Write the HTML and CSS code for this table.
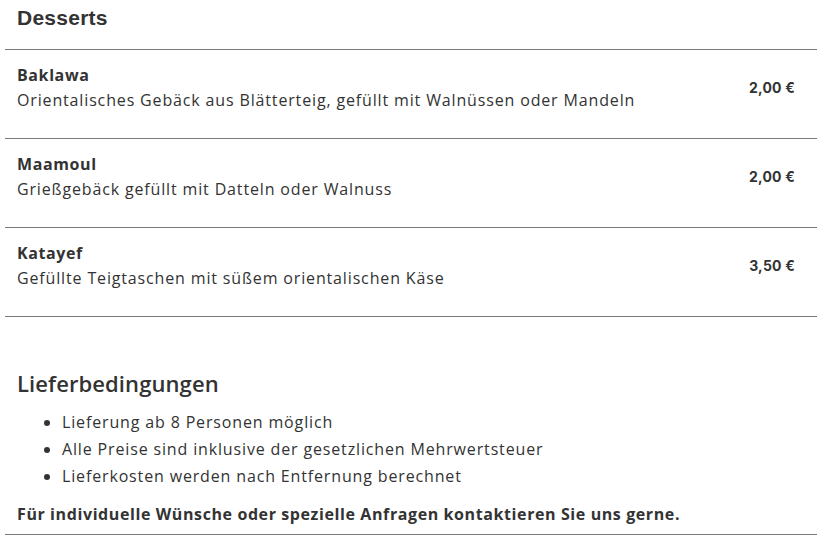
FILE: index.html
```html
<!DOCTYPE html>
<html lang="de">
<head>
<meta charset="utf-8">
<title>Desserts</title>
<link rel="stylesheet" href="styles.css">
</head>
<body>
<main class="page">
  <section class="menu">
    <h2 class="menu-title">Desserts</h2>
    <div class="item">
      <div class="item-text">
        <h3 class="item-name">Baklawa</h3>
        <p class="item-desc">Orientalisches Gebäck aus Blätterteig, gefüllt mit Walnüssen oder Mandeln</p>
      </div>
      <div class="item-price">2,00 €</div>
    </div>
    <div class="item">
      <div class="item-text">
        <h3 class="item-name">Maamoul</h3>
        <p class="item-desc">Grießgebäck gefüllt mit Datteln oder Walnuss</p>
      </div>
      <div class="item-price">2,00 €</div>
    </div>
    <div class="item">
      <div class="item-text">
        <h3 class="item-name">Katayef</h3>
        <p class="item-desc">Gefüllte Teigtaschen mit süßem orientalischen Käse</p>
      </div>
      <div class="item-price">3,50 €</div>
    </div>
  </section>
  <section class="terms">
    <h2 class="terms-title">Lieferbedingungen</h2>
    <ul class="terms-list">
      <li>Lieferung ab 8 Personen möglich</li>
      <li>Alle Preise sind inklusive der gesetzlichen Mehrwertsteuer</li>
      <li>Lieferkosten werden nach Entfernung berechnet</li>
    </ul>
    <p class="terms-note">Für individuelle Wünsche oder spezielle Anfragen kontaktieren Sie uns gerne.</p>
  </section>
</main>
</body>
</html>
```
FILE: styles.css
```css
html, body {
  margin: 0;
  padding: 0;
  background: #fff;
}
body {
  color: #333;
  font-family: "Open Sans", "DejaVu Sans", sans-serif;
  font-size: 16px;
  letter-spacing: 0.85px;
}
.page {
  padding: 0 5px;
}
.menu-title {
  margin: 0;
  padding: 4px 12px 0;
  height: 50px;
  box-sizing: border-box;
  font-family: "Liberation Sans", Arial, sans-serif;
  font-weight: 700;
  font-size: 21px;
  line-height: 28px;
  letter-spacing: 0.25px;
  color: #333;
  border-bottom: 1px solid #7a7a7a;
}
.item {
  display: flex;
  align-items: center;
  padding: 13px 22px 24px 12px;
  border-bottom: 1px solid #7a7a7a;
}
.item-text {
  flex: 1;
}
.item-name {
  margin: 0;
  font-size: 16px;
  font-weight: 700;
  line-height: 24px;
  letter-spacing: 0.6px;
}
.item-desc {
  margin: 0;
  line-height: 27px;
}
.item-price {
  margin-bottom: 3px;
  font-family: Inter, "Open Sans", sans-serif;
  font-weight: 700;
  font-size: 14px;
  letter-spacing: 0.2px;
  color: #333;
}
.terms {
  padding: 50px 12px 0;
  border-bottom: 1px solid #7a7a7a;
}
.terms-title {
  margin: 0 0 10px;
  font-size: 22px;
  font-weight: 600;
  line-height: 32px;
  letter-spacing: 0.1px;
}
.terms-list {
  margin: 0;
  padding-left: 45px;
}
.terms-list li {
  line-height: 27px;
}
.terms-note {
  margin: 12px 0 0;
  padding-bottom: 8px;
  font-weight: 700;
  line-height: 24px;
  letter-spacing: 0.6px;
}
```
